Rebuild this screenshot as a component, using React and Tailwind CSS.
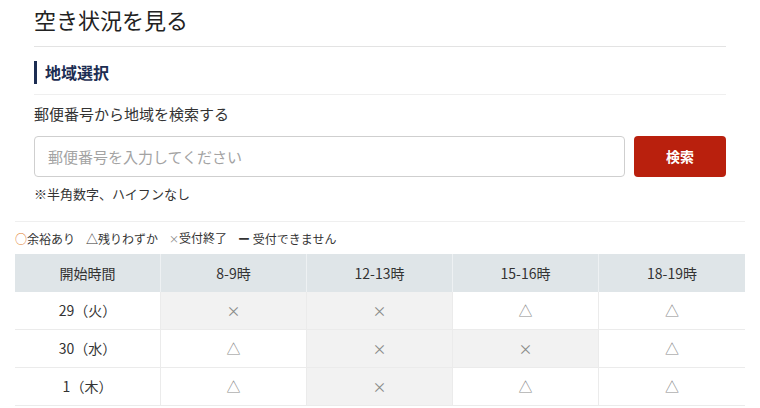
const font = { fontFamily: '"Noto Sans CJK JP", "Noto Sans", sans-serif' };

const slots = ['8-9時', '12-13時', '15-16時', '18-19時'];

const rows = [
  { day: '29（火）', marks: ['×', '×', '△', '△'] },
  { day: '30（水）', marks: ['△', '×', '×', '△'] },
  { day: '1（木）', marks: ['△', '×', '△', '△'] },
];

const Mark = ({ m }) => (
  <div
    className={`h-[38px] flex items-center justify-center border-r border-b border-[#ebebeb] last:border-r-0 text-[14px] text-[#8a8a8a] ${
      m === '×' ? 'bg-[#f2f2f2]' : 'bg-white'
    }`}
  >
    {m}
  </div>
);

export default function App() {
  return (
    <div className="w-[760px] h-[408px] overflow-hidden bg-white text-[#333]" style={font}>
      <div className="px-[15px]">
        <div className="px-[19px]">
          {/* title */}
          <h1 className="pt-[3px] pb-[11px] text-[22px] leading-[32px] font-normal text-[#222] border-b border-[#e3e3e3]">
            空き状況を見る
          </h1>

          {/* section heading */}
          <div className="pt-[14px] pb-[10px] border-b border-[#efefef]">
            <h2 className="h-[23px] border-l-[3px] border-[#1c2d52] pl-[8px] text-[16px] leading-[23px] font-bold text-[#1c2d52]">
              地域選択
            </h2>
          </div>

          <p className="pt-[8px] text-[15px] leading-[22px] text-[#333]">郵便番号から地域を検索する</p>

          <div className="mt-[11px] flex gap-[9px]">
            <input
              type="text"
              placeholder="郵便番号を入力してください"
              className="flex-1 h-[41px] rounded-[4px] border border-[#cfcfcf] px-[13px] text-[15px] placeholder:text-[#a3a3a3] outline-none"
              style={font}
            />
            <button className="w-[92px] h-[41px] rounded-[4px] bg-[#b9200d] text-white text-[14px] font-bold">
              検索
            </button>
          </div>

          <p className="mt-[7px] pb-[17px] text-[13px] leading-[20px]">※半角数字、ハイフンなし</p>
        </div>

        {/* legend */}
        <div className="border-t border-[#efefef] pt-[6px] flex items-center gap-[11px] text-[12px] leading-[19px] text-[#333]">
          <span>
            <span className="text-[#e07b2a]">○</span>余裕あり
          </span>
          <span>△残りわずか</span>
          <span>
            <span className="text-[10px] text-[#888]">×</span>受付終了
          </span>
          <span>
            <span className="font-bold">ー</span> 受付できません
          </span>
        </div>

        {/* table */}
        <div className="mt-[6px] grid grid-cols-5 text-[14px]">
          <div className="h-[38px] flex items-center justify-center bg-[#dfe5e8] border-r border-[#eef1f3]">開始時間</div>
          {slots.map((s, i) => (
            <div
              key={s}
              className={`h-[38px] flex items-center justify-center bg-[#dfe5e8] ${i < 3 ? 'border-r border-[#eef1f3]' : ''}`}
            >
              {s}
            </div>
          ))}
          {rows.map((r) => (
            <div key={r.day} className="contents">
              <div className="h-[38px] flex items-center justify-center border-r border-b border-[#ebebeb] bg-white">
                {r.day}
              </div>
              {r.marks.map((m, i) => (
                <Mark key={i} m={m} />
              ))}
            </div>
          ))}
        </div>
      </div>
    </div>
  );
}
